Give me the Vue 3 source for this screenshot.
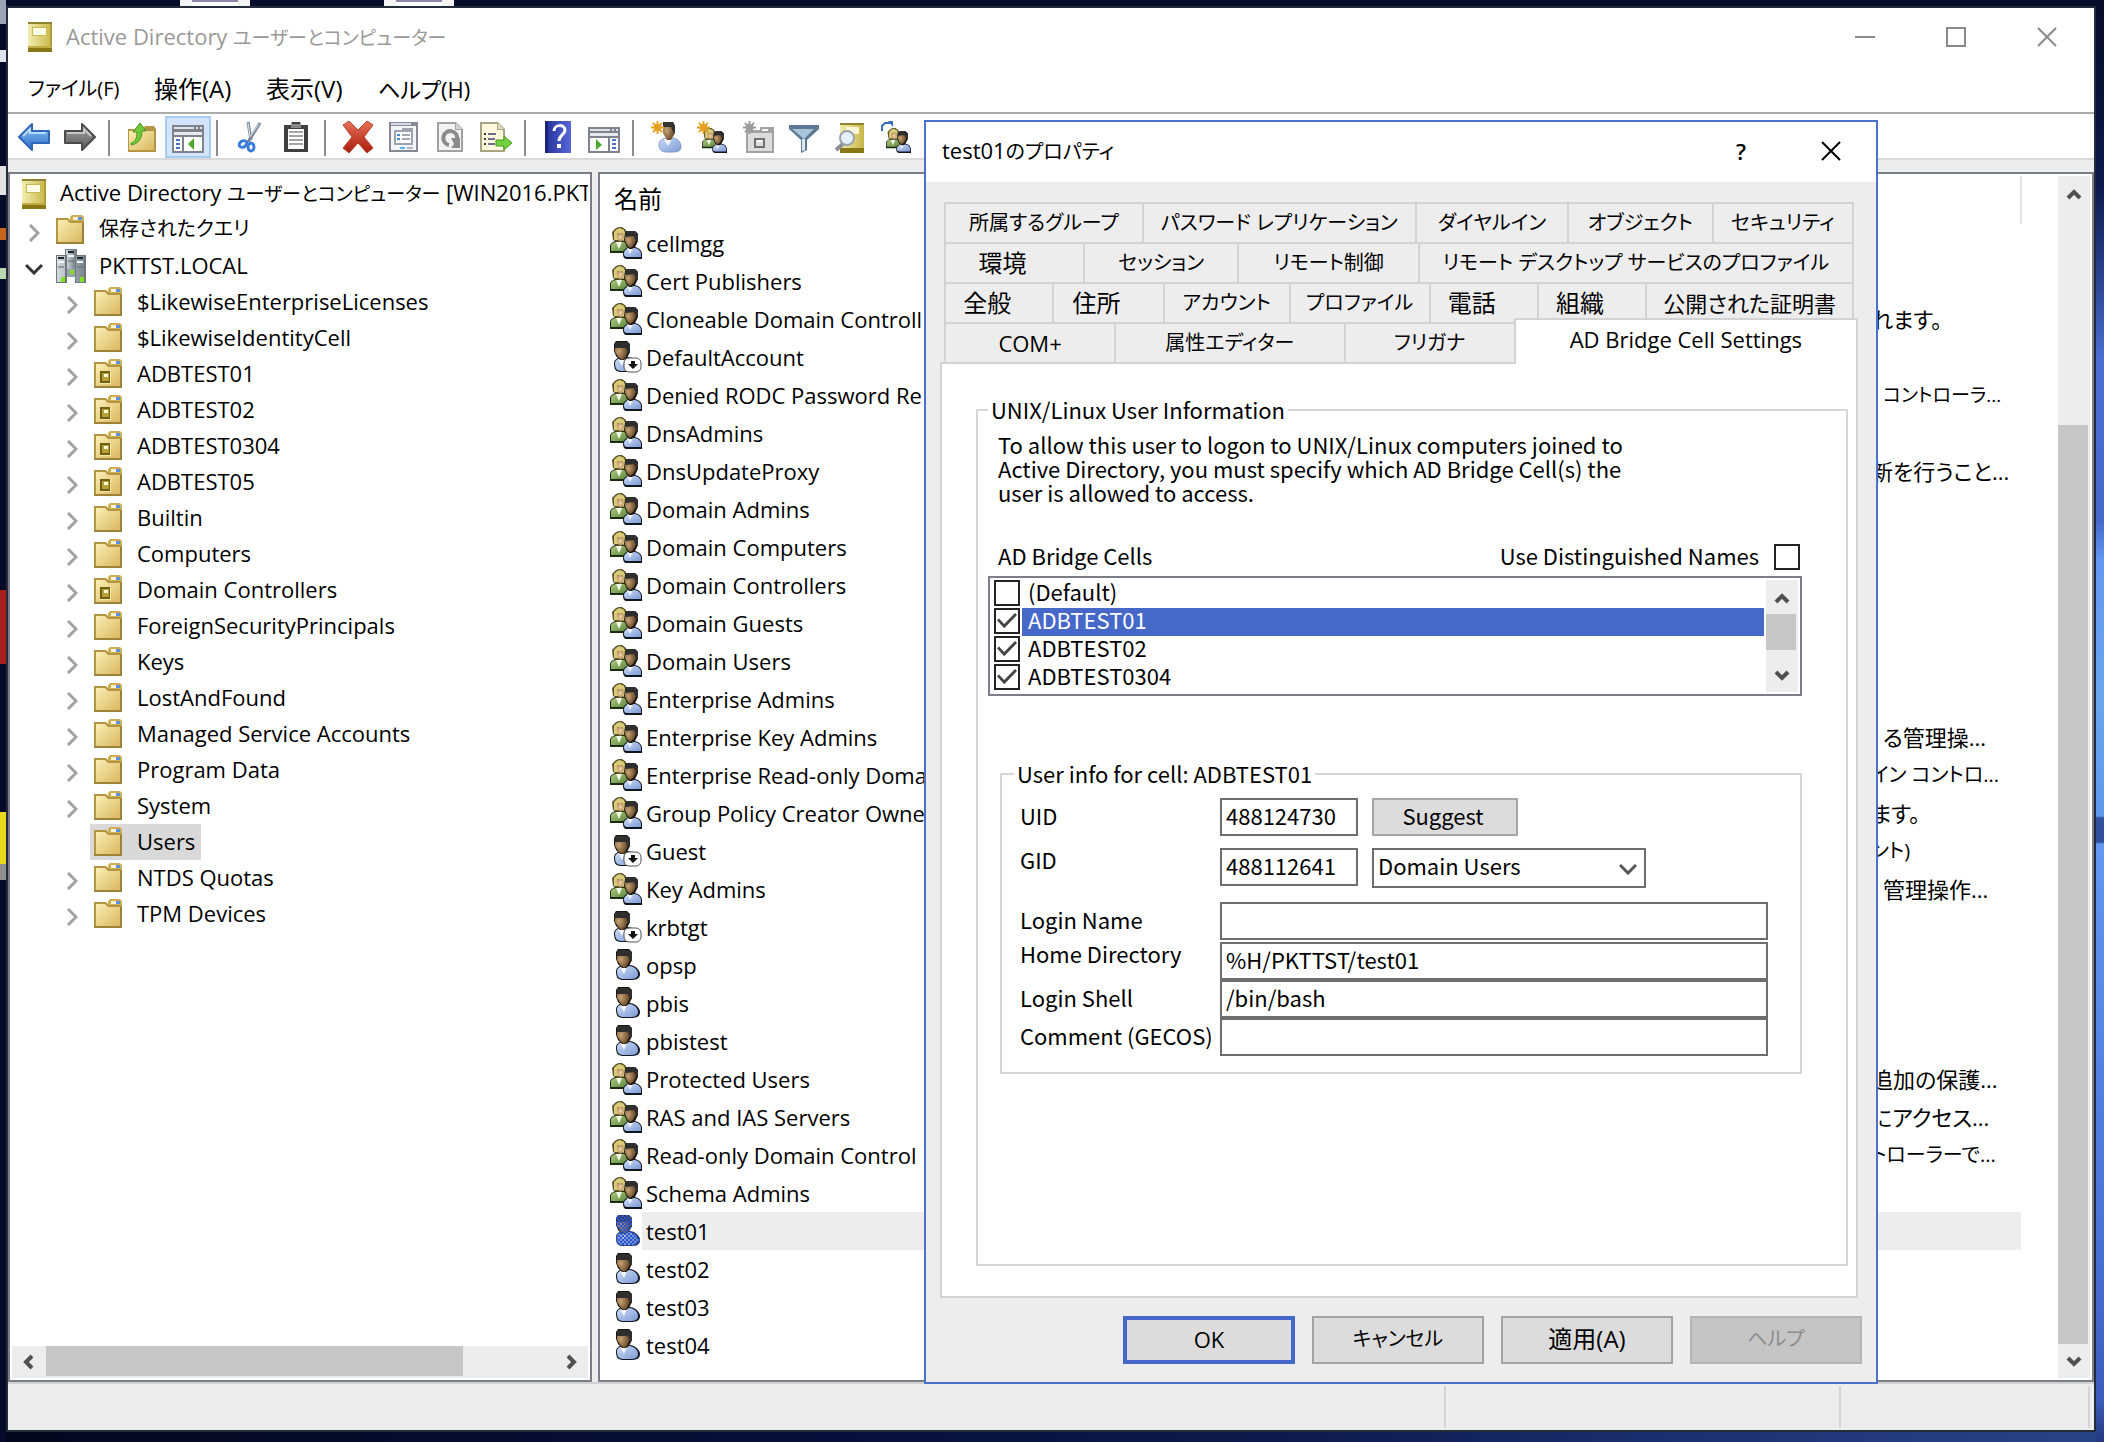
<script setup>
import { ref } from 'vue'

const menus = [
  { name: 'ファイル(F)', face: 'kana' },
  { name: '操作(A)', face: 'kanji' },
  { name: '表示(V)', face: 'kanji' },
  { name: 'ヘルプ(H)' }
]

const tools = [
  [{ icon: 'back', label: '戻る' }, { icon: 'forward', label: '進む' }],
  [{ icon: 'folder-up', label: '上へ' }, { icon: 'tree-pane', label: 'ツリーの表示', on: true }],
  [{ icon: 'cut', label: '切り取り' }, { icon: 'clipboard', label: 'コピー' }],
  [
    { icon: 'delete', label: '削除' },
    { icon: 'props', label: 'プロパティ' },
    { icon: 'refresh', label: '最新の情報に更新' },
    { icon: 'export', label: '一覧のエクスポート' }
  ],
  [{ icon: 'help', label: 'ヘルプ' }, { icon: 'action-pane', label: '操作ウィンドウ' }],
  [
    { icon: 'new-user', label: '新しいユーザー' },
    { icon: 'new-group', label: '新しいグループ' },
    { icon: 'new-ou', label: '新しい組織単位' },
    { icon: 'filter', label: 'フィルター' },
    { icon: 'find', label: '検索' },
    { icon: 'add-member', label: 'グループに追加' }
  ]
]

const tree = [
  { name: '$LikewiseEnterpriseLicenses', icon: 'folder' },
  { name: '$LikewiseIdentityCell', icon: 'folder' },
  { name: 'ADBTEST01', icon: 'ou' },
  { name: 'ADBTEST02', icon: 'ou' },
  { name: 'ADBTEST0304', icon: 'ou' },
  { name: 'ADBTEST05', icon: 'ou' },
  { name: 'Builtin', icon: 'folder' },
  { name: 'Computers', icon: 'folder' },
  { name: 'Domain Controllers', icon: 'ou' },
  { name: 'ForeignSecurityPrincipals', icon: 'folder' },
  { name: 'Keys', icon: 'folder' },
  { name: 'LostAndFound', icon: 'folder' },
  { name: 'Managed Service Accounts', icon: 'folder' },
  { name: 'Program Data', icon: 'folder' },
  { name: 'System', icon: 'folder' },
  { name: 'Users', icon: 'folder', selected: true },
  { name: 'NTDS Quotas', icon: 'folder' },
  { name: 'TPM Devices', icon: 'folder' }
]

const entries = [
  { name: 'cellmgg', icon: 'group' },
  { name: 'Cert Publishers', icon: 'group' },
  { name: 'Cloneable Domain Controll', icon: 'group', desc: 'れます。' },
  { name: 'DefaultAccount', icon: 'user-off' },
  { name: 'Denied RODC Password Re', icon: 'group', desc: 'コントローラ...', face: 'tight inset' },
  { name: 'DnsAdmins', icon: 'group' },
  { name: 'DnsUpdateProxy', icon: 'group', desc: '新を行うこと...' },
  { name: 'Domain Admins', icon: 'group' },
  { name: 'Domain Computers', icon: 'group' },
  { name: 'Domain Controllers', icon: 'group' },
  { name: 'Domain Guests', icon: 'group' },
  { name: 'Domain Users', icon: 'group' },
  { name: 'Enterprise Admins', icon: 'group' },
  { name: 'Enterprise Key Admins', icon: 'group', desc: 'る管理操...', face: 'inset' },
  { name: 'Enterprise Read-only Doma', icon: 'group', desc: 'イン コントロ...', face: 'kana' },
  { name: 'Group Policy Creator Owne', icon: 'group', desc: 'ます。' },
  { name: 'Guest', icon: 'user-off', desc: 'ント)', face: 'kana' },
  { name: 'Key Admins', icon: 'group', desc: '管理操作...', face: 'inset' },
  { name: 'krbtgt', icon: 'user-off' },
  { name: 'opsp', icon: 'user' },
  { name: 'pbis', icon: 'user' },
  { name: 'pbistest', icon: 'user' },
  { name: 'Protected Users', icon: 'group', desc: '追加の保護...' },
  { name: 'RAS and IAS Servers', icon: 'group', desc: 'にアクセス...' },
  { name: 'Read-only Domain Control', icon: 'group', desc: 'トローラーで...', face: 'kana' },
  { name: 'Schema Admins', icon: 'group' },
  { name: 'test01', icon: 'user-hot', selected: true },
  { name: 'test02', icon: 'user' },
  { name: 'test03', icon: 'user' },
  { name: 'test04', icon: 'user' }
]

/* size is the tab's share of its row */
const tabRows = [
  [
    { name: '所属するグループ', size: 198 },
    { name: 'パスワード レプリケーション', size: 274 },
    { name: 'ダイヤルイン', size: 152 },
    { name: 'オブジェクト', size: 144 },
    { name: 'セキュリティ', size: 140 }
  ],
  [
    { name: '環境', size: 138, face: 'short' },
    { name: 'セッション', size: 154 },
    { name: 'リモート制御', size: 180 },
    { name: 'リモート デスクトップ サービスのプロファイル', size: 436 }
  ],
  [
    { name: '全般', size: 108, face: 'short' },
    { name: '住所', size: 110, face: 'short' },
    { name: 'アカウント', size: 126 },
    { name: 'プロファイル', size: 140 },
    { name: '電話', size: 108, face: 'short' },
    { name: '組織', size: 108, face: 'short' },
    { name: '公開された証明書', size: 208, face: 'base' }
  ],
  [
    { name: 'COM+', size: 170, face: 'base' },
    { name: '属性エディター', size: 230 },
    { name: 'フリガナ', size: 170 },
    { name: 'AD Bridge Cell Settings', size: 344, face: 'base', active: true }
  ]
]

const cells = ref([
  { name: '(Default)', on: false },
  { name: 'ADBTEST01', on: true, selected: true },
  { name: 'ADBTEST02', on: true },
  { name: 'ADBTEST0304', on: true }
])
const useDn = ref(false)
const uid = ref('488124730')
const gid = ref('488112641')
const group = ref('Domain Users')
const fields = ref([
  { id: 'login', label: 'Login Name', value: '' },
  { id: 'home', label: 'Home Directory', value: '%H/PKTTST/test01' },
  { id: 'shell', label: 'Login Shell', value: '/bin/bash' },
  { id: 'gecos', label: 'Comment (GECOS)', value: '' }
])
</script>

<template>
  <div class="desktop">
    <svg class="defs" aria-hidden="true">
      <defs>
        <linearGradient id="gFolder" x1="0" y1="0" x2="1" y2="1"><stop offset="0" stop-color="#fbeeb4" /><stop offset="1" stop-color="#d9b860" /></linearGradient>
        <linearGradient id="gBook" x1="0" y1="0" x2="1" y2="0"><stop offset="0" stop-color="#f2edb0" /><stop offset="1" stop-color="#c9b647" /></linearGradient>
        <linearGradient id="gBlue" x1="0" y1="0" x2="0" y2="1"><stop offset="0" stop-color="#8fc3f7" /><stop offset="1" stop-color="#2c6fc9" /></linearGradient>
        <linearGradient id="gGrey" x1="0" y1="0" x2="0" y2="1"><stop offset="0" stop-color="#a9a9a9" /><stop offset="1" stop-color="#565656" /></linearGradient>
        <linearGradient id="gRed" x1="0" y1="0" x2="0" y2="1"><stop offset="0" stop-color="#e8705a" /><stop offset="1" stop-color="#a81c08" /></linearGradient>
        <linearGradient id="gHelp" x1="0" y1="0" x2="1" y2="0"><stop offset="0" stop-color="#25309a" /><stop offset="1" stop-color="#5568d8" /></linearGradient>
        <linearGradient id="gShirt" x1="0" y1="0" x2="1" y2="1"><stop offset="0" stop-color="#cddcf6" /><stop offset="1" stop-color="#7d9bd6" /></linearGradient>
        <linearGradient id="gGreen" x1="0" y1="0" x2="1" y2="1"><stop offset="0" stop-color="#a9c981" /><stop offset="1" stop-color="#5f8a3c" /></linearGradient>
        <radialGradient id="gSkin" cx=".3" cy=".45" r=".75"><stop offset="0" stop-color="#c9a273" /><stop offset="1" stop-color="#553a1c" /></radialGradient>
        <radialGradient id="gFair" cx=".5" cy=".5" r=".7"><stop offset="0" stop-color="#efd7ae" /><stop offset="1" stop-color="#a67a45" /></radialGradient>
        <linearGradient id="gServer" x1="0" y1="0" x2="1" y2="0"><stop offset="0" stop-color="#d4dade" /><stop offset="1" stop-color="#7b868d" /></linearGradient>
        <pattern id="pDots" width="4" height="4" patternUnits="userSpaceOnUse"><path d="M0 0h2v2H0zM2 2h2v2H2z" fill="#2f57cc" /></pattern>
      </defs>

      <symbol id="i-book" viewBox="0 0 24 30">
        <path d="M0 0h24v30H0z" fill="url(#gBook)" /><path d="M0 0h24v2H0z" fill="#8f8330" /><path d="M0 24h24v6H0z" fill="#8a7716" /><path d="M0 24h24v2H0z" fill="#c0ac40" />
        <path d="M4 5h15v9H4z" fill="#c8b850" /><path d="M5 6h13v7H5z" fill="#fdfce6" /><path d="M22 2h2v22h-2z" fill="#b09d35" />
      </symbol>
      <symbol id="i-folder" viewBox="0 0 28 30">
        <path d="M14 4V2l2-2h10l2 2v5H14z" fill="#cfae55" /><path d="M17 2h9v3h-9z" fill="#fff6d6" /><path d="M22 2h4v3h-4z" fill="#5d8fe0" />
        <path d="M0 3h12l3 3h13v23H0z" fill="#b39542" /><path d="M2 5h9l3 3h12v19H2z" fill="url(#gFolder)" /><path d="M26 8h2v21H0v-2h26z" fill="#9d8338" />
      </symbol>
      <symbol id="i-ou" viewBox="0 0 28 30">
        <use href="#i-folder" width="28" height="30" /><path d="M6 12h11v13H6z" fill="#f6e8a5" /><path d="M6 12h10v12H6z" fill="#6f5f12" /><path d="M8 14h7v8H8z" fill="#b8a238" /><path d="M10 15h4v3h-4z" fill="#fffbe0" />
      </symbol>
      <symbol id="i-domain" viewBox="0 0 30 34">
        <path d="M9 0h12v26H9z" fill="#76828a" /><path d="M10 1h9v24h-9z" fill="url(#gServer)" /><path d="M0 6h11v28H0zM19 6h11v28H19z" fill="#6c777e" /><path d="M1 7h8v26H1zM20 7h8v26h-8z" fill="url(#gServer)" />
        <path d="M11 20h8v8h-8z" fill="#98a4ab" /><path d="M2 9h6M21 9h6M12 3h6" stroke="#1d262c" stroke-width="2" /><path d="M2 13h6M21 13h6M12 7h6" stroke="#f4f7f8" stroke-width="2" /><path d="M2 18h6M21 18h6M12 12h6" stroke="#57636b" stroke-width="1" />
        <path d="M5 28h4v5H5zM14 21h4v4h-4zM24 28h4v5h-4z" fill="#84e01c" />
      </symbol>

      <symbol id="i-person" viewBox="0 0 32 32">
        <path d="M6 22c0-3 4-6 8-6h5c6 0 11 5 11 9 0 5-4 6-10 6h-6c-6 0-8-2-8-9z" fill="#10161f" /><path d="M7 22c0-3 4-5 7-5h5c5 0 9 4 9 8s-3 5-8 5h-6c-5 0-7-2-7-8z" fill="url(#gShirt)" /><path d="M10 18l4 7 3-7z" fill="#f4f7fd" />
        <path d="M6 3l2-3h11l3 3v8l-3 6-3 2h-4l-4-4-2-5z" fill="#1a1611" /><path d="M7 5l10-2 3 4v4l-3 6-3 2-3-2-4-6z" fill="url(#gSkin)" /><path d="M7 1h12l3 3v8h-2l-2-5H7z" fill="#2e2e2e" />
      </symbol>
      <symbol id="i-user" viewBox="0 0 32 32"><use href="#i-person" width="32" height="32" /></symbol>
      <symbol id="i-user-off" viewBox="0 0 32 32">
        <use href="#i-person" x="-2" width="32" height="32" /><rect x="14" y="17" width="17" height="14" rx="5" fill="#fff" stroke="#555" stroke-width="1" /><path d="M21 20h4v3h3l-5 5-5-5h3z" fill="#111" />
      </symbol>
      <symbol id="i-user-hot" viewBox="0 0 32 32">
        <use href="#i-person" width="32" height="32" /><path d="M8 0h11l3 3v8l-3 5c6 1 11 5 11 9 0 5-4 6-10 6h-6c-6 0-8-2-8-9 0-3 3-5 5-6l-5-6V3z" fill="#3f63cf" fill-opacity=".4" /><path d="M8 0h11l3 3v8l-3 5c6 1 11 5 11 9 0 5-4 6-10 6h-6c-6 0-8-2-8-9 0-3 3-5 5-6l-5-6V3z" fill="url(#pDots)" />
      </symbol>
      <symbol id="i-group" viewBox="0 0 32 32">
        <path d="M0 19c0-3 4-5 7-5h7c3 0 4 4 4 12H0z" fill="#1d2a12" /><path d="M1 19c0-3 3-4 6-4h7c2 0 3 3 3 9H1z" fill="url(#gGreen)" /><path d="M6 15l3 7 3-7z" fill="#f2f5e8" />
        <path d="M2 5l4-4 3-1h3l4 3v8l-4 4H7l-4-2z" fill="#5a5128" /><path d="M4 5l3-3 3-1 4 2 1 3v7H4z" fill="#d8cc78" /><path d="M7 6h6l1 4-2 4H9l-2-4z" fill="url(#gFair)" />
        <path d="M13 26c0-3 4-6 8-6h3c5 0 8 4 8 7v5H17c-3 0-4-2-4-6z" fill="#10161f" /><path d="M14 26c0-3 4-5 7-5h3c4 0 7 3 7 6v3H17c-2 0-3-1-3-4z" fill="url(#gShirt)" /><path d="M17 21l3 6 3-6z" fill="#f4f7fd" />
        <path d="M15 6l3-2h7l3 3v7l-3 6-3 2h-3l-3-4-2-5z" fill="#1a1611" /><path d="M15 8l8-1 3 3v4l-3 5-3 2-3-3-2-5z" fill="url(#gSkin)" /><path d="M16 4h9l3 3v7h-2l-2-5-9 1z" fill="#2e2e2e" />
      </symbol>

      <symbol id="i-back" viewBox="0 0 32 32"><path d="M1 16L14 3v7h17v12H14v7z" fill="url(#gBlue)" stroke="#2f66b5" stroke-width="2" stroke-linejoin="round" /><path d="M5 15l7-7v4h16" fill="none" stroke="#b8dcff" stroke-width="2" /></symbol>
      <symbol id="i-forward" viewBox="0 0 32 32"><path d="M31 16L18 3v7H1v12h17v7z" fill="url(#gGrey)" stroke="#4b4b4b" stroke-width="2" stroke-linejoin="round" /><path d="M3 12h17V8l7 7" fill="none" stroke="#c6c6c6" stroke-width="2" /></symbol>
      <symbol id="i-folder-up" viewBox="0 0 32 32">
        <path d="M2 8h15l2-3h9l2 3v23H2z" fill="#b39542" /><path d="M3 10h25v19H3z" fill="url(#gFolder)" /><path d="M5 22c4-1 6-4 6-11H7l7-9 6 8h-4c0 8-4 13-11 14z" fill="#6fc93a" stroke="#4a9424" stroke-width="1" />
      </symbol>
      <symbol id="i-tree-pane" viewBox="0 0 32 32">
        <path d="M0 4h32v28H0z" fill="#7e828c" /><path d="M2 11h28v3H2z" fill="#e8eaf0" /><path d="M2 6h20v2H2zM24 6h2v2h-2zM28 6h2v2h-2z" fill="#dfe2ea" /><path d="M2 16h28v14H2z" fill="#fff" /><path d="M10 16h2v14h-2z" fill="#7e828c" />
        <path d="M4 18h4v2H4zM4 22h4v2H4zM4 26h4v2H4z" fill="#4579c4" /><path d="M22 17v12l-6-6z" fill="#4aa92c" />
      </symbol>
      <symbol id="i-action-pane" viewBox="0 0 32 32">
        <path d="M0 6h32v26H0z" fill="#7e828c" /><path d="M2 12h28v3H2z" fill="#e8eaf0" /><path d="M2 8h20v2H2zM24 8h2v2h-2zM28 8h2v2h-2z" fill="#dfe2ea" /><path d="M2 17h28v13H2z" fill="#fff" /><path d="M20 17h2v13h-2z" fill="#7e828c" />
        <path d="M24 18h4v2h-4zM24 22h4v2h-4zM24 26h4v2h-4z" fill="#4579c4" /><path d="M8 18v11l6-5z" fill="#4aa92c" />
      </symbol>
      <symbol id="i-cut" viewBox="0 0 32 32">
        <path d="M14 1l3 18M26 2L14 21" stroke="#76869a" stroke-width="3" fill="none" /><path d="M14 2l2 13M25 3l-9 13" stroke="#dfe5ec" stroke-width="1" fill="none" /><ellipse cx="9" cy="23" rx="4" ry="3" transform="rotate(-30 9 23)" fill="none" stroke="#3a7bdc" stroke-width="3" /><ellipse cx="17" cy="26" rx="3" ry="4" fill="none" stroke="#3a7bdc" stroke-width="3" />
      </symbol>
      <symbol id="i-clipboard" viewBox="0 0 32 32"><path d="M4 4h7l1-3h8l1 3h7v27H4z" fill="#3f3f3f" /><path d="M8 8h16v20H8z" fill="#fff" /><path d="M11 3h10v4H11z" fill="#8a8a8a" /><path d="M9 11h14M9 15h14M9 19h14M9 23h14" stroke="#a5a5a5" stroke-width="2" /></symbol>
      <symbol id="i-delete" viewBox="0 0 32 32"><path d="M1 4l6-4 9 9 9-9 6 4-9 12 9 11-6 5-9-10-9 10-6-5 9-11z" fill="url(#gRed)" stroke="#b5432f" stroke-width="1" /></symbol>
      <symbol id="i-props" viewBox="0 0 32 32">
        <path d="M1 1h29v30H1z" fill="#868a92" /><path d="M3 5h25v24H3z" fill="#f3f4f7" /><path d="M3 2h20v2H3z" fill="#d8dbe2" /><path d="M6 9h8v-2h11v17H6z" fill="#9da3b0" /><path d="M8 11h15v11H8z" fill="#fff" /><path d="M9 13h3v2H9zM9 17h3v2H9z" fill="#4b87d8" /><path d="M14 13h8v2h-8zM14 17h8v2h-8z" fill="#a5a9b1" /><path d="M12 26h5v2h-5z" fill="#58b6e8" /><path d="M19 26h6v2h-6z" fill="#b5b9c1" />
      </symbol>
      <symbol id="i-refresh" viewBox="0 0 32 32"><path d="M3 1h19l7 7v23H3z" fill="#a2a2a2" /><path d="M5 3h16v6h6v20H5z" fill="#f3f3f3" /><path d="M22 2v6h6z" fill="#d5d5d5" /><path d="M15 24a7 7 0 1 1 8-5" fill="none" stroke="#8b8b8b" stroke-width="4" /><path d="M17 17h9v10h-9l3-4z" fill="#8b8b8b" /></symbol>
      <symbol id="i-export" viewBox="0 0 32 32"><path d="M0 1h18l7 7v23H0z" fill="#a9a383" /><path d="M2 3h15v6h6v20H2z" fill="#fdf8dc" /><path d="M18 2v6h6z" fill="#ded9bf" /><path d="M4 13h2M4 18h2M4 23h2" stroke="#3b3b3b" stroke-width="2" /><path d="M8 13h8M8 18h7M8 23h7" stroke="#6c6c8c" stroke-width="2" /><path d="M16 19h8v-4l8 7-8 7v-4h-8z" fill="#72cf3e" stroke="#4c9e25" stroke-width="1" /></symbol>
      <symbol id="i-help" viewBox="0 0 32 32"><path d="M3 0h26v32H3z" fill="url(#gHelp)" /><path d="M3 0h3v32H3z" fill="#1c2478" /><path d="M12 10c0-7 11-7 11-1 0 5-6 5-6 11" fill="none" stroke="#fff" stroke-width="3" /><path d="M15 23h4v4h-4z" fill="#fff" /></symbol>
      <symbol id="i-spark" viewBox="0 0 14 14"><path d="M7 0v14M0 7h14M2 2l10 10M12 2L2 12" stroke="currentColor" stroke-width="2" /><circle cx="7" cy="7" r="4" fill="currentColor" /></symbol>
      <symbol id="i-new-user" viewBox="0 0 32 32">
        <path d="M9 23c0-3 4-6 8-6h5c5 0 9 4 9 9 0 4-3 5-9 5h-5c-6 0-8-3-8-8z" fill="url(#gShirt)" stroke="#8197c4" /><path d="M14 18l4 7 4-7z" fill="#f7f9fe" /><path d="M13 1h10l2 4v7l-4 7h-4l-4-7V3z" fill="url(#gSkin)" /><path d="M13 1h10l2 4v6h-2l-2-5h-8z" fill="#333" /><use href="#i-spark" class="gold" x="1" y="0" width="13" height="13" />
      </symbol>
      <symbol id="i-new-group" viewBox="0 0 32 32"><use href="#i-group" x="5" y="7" width="27" height="25" /><use href="#i-spark" class="gold" x="1" y="0" width="13" height="13" /></symbol>
      <symbol id="i-new-ou" viewBox="0 0 32 32"><path d="M4 9h14V6h14v26H4z" fill="#a3a3a3" /><path d="M6 12h24v18H6z" fill="#dcdcdc" /><path d="M20 8h6v2h-6z" fill="#f7f7f7" /><path d="M12 17h11v10H12z" fill="#707070" /><path d="M14 19h7v6h-7z" fill="#dedede" /><path d="M15 19h5v2h-5z" fill="#fff" /><use href="#i-spark" class="dim" x="1" y="0" width="13" height="13" /></symbol>
      <symbol id="i-filter" viewBox="0 0 32 32"><path d="M1 4h30v4L19 19v10l-6 3V19L1 8z" fill="#5b7895" /><path d="M4 8h22L16 18z" fill="#a9c3db" /><path d="M14 18h3v11l-3 1z" fill="#dfe9f2" /></symbol>
      <symbol id="i-find" viewBox="0 0 32 32"><path d="M6 2h24v30H6z" fill="url(#gBook)" /><path d="M6 2h24v2H6z" fill="#8f8330" /><path d="M6 27h24v5H6z" fill="#8a7716" /><path d="M12 6h13v7H12z" fill="#fdf9d8" /><path d="M10 22l-8 7" stroke="#8a8f96" stroke-width="4" /><circle cx="13" cy="17" r="7" fill="#e4f1fb" stroke="#9aa3ad" stroke-width="2" /></symbol>
      <symbol id="i-add-member" viewBox="0 0 32 32"><use href="#i-group" x="5" y="7" width="27" height="25" /><path d="M2 10V5l3-3h6" fill="none" stroke="#3a6fb8" stroke-width="2" /><path d="M8 0h5v6z" fill="#3a6fb8" /></symbol>
      <symbol id="i-chevron" viewBox="0 0 12 18"><path d="M2 1l8 8-8 8" fill="none" stroke="currentColor" stroke-width="3" /></symbol>
      <symbol id="i-arrow" viewBox="0 0 16 16"><path d="M2 11l6-6 6 6" fill="none" stroke="currentColor" stroke-width="4" /></symbol>
      <symbol id="i-close" viewBox="0 0 20 20"><path d="M1 1l18 18M19 1L1 19" stroke="currentColor" stroke-width="2" /></symbol>
    </svg>

    <div class="scrap scrap-a"></div>
    <div class="scrap scrap-b"></div>

    <main class="console">
      <header class="titlebar">
        <svg class="book"><use href="#i-book" /></svg>
        <h1>Active Directory <span class="tight">ユーザーとコンピューター</span></h1>
        <button class="winbtn" aria-label="最小化"><span class="min"></span></button>
        <button class="winbtn" aria-label="最大化"><span class="max"></span></button>
        <button class="winbtn" aria-label="閉じる"><svg class="x"><use href="#i-close" /></svg></button>
      </header>

      <nav class="menubar">
        <button v-for="m in menus" :key="m.name" :class="m.face">{{ m.name }}</button>
      </nav>

      <div class="toolbar" role="toolbar">
        <div v-for="(set, i) in tools" :key="i" class="toolset">
          <button v-for="t in set" :key="t.icon" :class="{ on: t.on }" :aria-label="t.label">
            <svg><use :href="'#i-' + t.icon" /></svg>
          </button>
        </div>
      </div>

      <div class="panes">
        <section class="pane tree">
          <ul class="nodes">
            <li class="root"><svg class="book"><use href="#i-book" /></svg><p>Active Directory <span class="tight">ユーザーとコンピューター</span> [WIN2016.PKT</p></li>
            <li class="top"><svg class="chev"><use href="#i-chevron" /></svg><svg class="ico"><use href="#i-folder" /></svg><p class="kana">保存されたクエリ</p></li>
            <li class="top"><svg class="chev open"><use href="#i-chevron" /></svg><svg class="ico server"><use href="#i-domain" /></svg><p>PKTTST.LOCAL</p></li>
            <li v-for="n in tree" :key="n.name" class="sub">
              <svg class="chev" :class="{ none: n.selected }"><use href="#i-chevron" /></svg>
              <div class="node" :class="{ selected: n.selected }"><svg class="ico"><use :href="'#i-' + n.icon" /></svg><p>{{ n.name }}</p></div>
            </li>
          </ul>
          <div class="hscroll">
            <button aria-label="左へ"><svg class="left"><use href="#i-arrow" /></svg></button>
            <div class="track"><div class="thumb"></div></div>
            <button aria-label="右へ"><svg class="right"><use href="#i-arrow" /></svg></button>
          </div>
        </section>

        <section class="pane list">
          <table>
            <colgroup><col class="c-icon" /><col /><col class="c-desc" /></colgroup>
            <thead>
              <tr><th colspan="2" scope="col" class="kanji">名前</th><th class="edge"></th></tr>
            </thead>
            <tbody>
              <tr v-for="(e, i) in entries" :key="i" :class="{ selected: e.selected }">
                <td class="icon"><svg><use :href="'#i-' + e.icon" /></svg></td>
                <td class="name">{{ e.name }}</td>
                <td class="desc" :class="e.face">{{ e.desc }}</td>
              </tr>
            </tbody>
          </table>
          <div class="vscroll">
            <button aria-label="上へ"><svg><use href="#i-arrow" /></svg></button>
            <div class="track"><div class="thumb"></div></div>
            <button aria-label="下へ"><svg class="down"><use href="#i-arrow" /></svg></button>
          </div>
        </section>
      </div>

      <footer class="status"><span></span><span></span><span></span></footer>
    </main>

    <section class="dialog" role="dialog" aria-labelledby="dlg-title">
      <header>
        <h2 id="dlg-title">test01<span class="kana">のプロパティ</span></h2>
        <button class="dlgbtn" aria-label="ヘルプ">?</button>
        <button class="dlgbtn" aria-label="閉じる"><svg class="x"><use href="#i-close" /></svg></button>
      </header>

      <div class="tabs" role="tablist">
        <div v-for="(row, i) in tabRows" :key="i" class="tabrow" :class="{ front: i === 3 }">
          <button v-for="t in row" :key="t.name" role="tab" :aria-selected="!!t.active" :class="[t.face || 'kana', { active: t.active }]" :style="{ flexGrow: t.size }"><span>{{ t.name }}</span></button>
        </div>
      </div>

      <div class="page">
        <fieldset class="outer">
          <legend>UNIX/Linux User Information</legend>
          <p>To allow this user to logon to UNIX/Linux computers joined to<br />Active Directory, you must specify which AD Bridge Cell(s) the<br />user is allowed to access.</p>

          <div class="cellhead">
            <span>AD Bridge Cells</span>
            <label><span>Use Distinguished Names</span><input v-model="useDn" type="checkbox" /></label>
          </div>

          <div class="listbox">
            <div class="rows">
              <label v-for="c in cells" :key="c.name" :class="{ selected: c.selected }"><input v-model="c.on" type="checkbox" /><span>{{ c.name }}</span></label>
            </div>
            <div class="vscroll small">
              <button aria-label="上へ"><svg><use href="#i-arrow" /></svg></button>
              <div class="track"><div class="thumb"></div></div>
              <button aria-label="下へ"><svg class="down"><use href="#i-arrow" /></svg></button>
            </div>
          </div>

          <fieldset class="inner">
            <legend>User info for cell: ADBTEST01</legend>
            <div class="row ids">
              <label for="uid">UID</label>
              <input id="uid" v-model="uid" type="text" />
              <button class="suggest">Suggest</button>
            </div>
            <div class="row ids gid">
              <label for="gid">GID</label>
              <input id="gid" v-model="gid" type="text" />
              <div class="combo">
                <select v-model="group" aria-label="Group"><option>Domain Users</option></select>
                <svg><use href="#i-chevron" /></svg>
              </div>
            </div>
            <div v-for="f in fields" :key="f.id" class="row" :class="f.id">
              <label :for="f.id">{{ f.label }}</label>
              <input :id="f.id" v-model="f.value" type="text" />
            </div>
          </fieldset>
        </fieldset>
      </div>

      <footer>
        <button class="default">OK</button>
        <button class="kana">キャンセル</button>
        <button class="kanji">適用(A)</button>
        <button class="kana" disabled>ヘルプ</button>
      </footer>
    </section>
  </div>
</template>

<style>
body {
  margin: 0;
  background: #050a28;
}
</style>

<style scoped>
* {
  box-sizing: border-box;
}
.desktop {
  position: relative;
  display: flex;
  min-height: 100vh;
  padding: 6px 8px 10px 6px;
  overflow: hidden;
  font: 22px/36px "Open Sans", "Noto Sans CJK JP", sans-serif;
  font-feature-settings: "palt";
  color: #000;
  background:
    linear-gradient(#9aa4b5 0 24px, #050a28 24px 50px, #dfe3ea 50px 62px, #050a28 62px 166px, #e3e3e3 166px 195px, #050a28 195px 228px, #c9641f 228px 240px, #050a28 240px 268px, #b9d8b0 268px 279px, #050a28 279px 590px, #a8201c 590px 664px, #050a28 664px 812px, #e8d820 812px 864px, #8f8f8f 864px 880px, #050a28 880px) left / 6px 100% no-repeat,
    linear-gradient(#060c28 0, #0d1848 180px, #2a4490 280px, #4b70d2 360px, #4668c9 520px, #6398f0 560px, #6ba6ee 700px, #5f98ec 816px, #33509f 818px 842px, #6398f0 844px, #4a70d4 1250px, #3c5cba 1400px, #24397c) right / 8px 100% no-repeat,
    linear-gradient(90deg, #03061c 0, #07103a 40%, #0e1a4c 62%, #1c3070 80%, #2a4488) bottom / 100% 12px no-repeat,
    #060b2a;
}
.defs {
  position: absolute;
  width: 0;
  height: 0;
}
.gold {
  color: #e8a020;
}
.dim {
  color: #9a9a9a;
}
.scrap {
  position: absolute;
  top: 0;
  width: 70px;
  height: 6px;
  background: linear-gradient(#8a86a8 0 2px, #fff 2px);
  border: solid #f4f4f4;
  border-width: 0 12px;
}
.scrap-a {
  left: 180px;
}
.scrap-b {
  left: 384px;
}
button,
input,
select {
  font: inherit;
  font-feature-settings: inherit;
  color: inherit;
  border-radius: 0;
  margin: 0;
}
button {
  padding: 0;
  border: 0;
  background: none;
}
h1,
h2,
p,
ul {
  margin: 0;
  padding: 0;
  font-size: inherit;
  font-weight: 400;
}

/* type sizes beside the base: kana strings run smaller, short kanji words larger */
.tight {
  font-size: 19px;
}
.desktop .kana {
  font-size: 20px;
}
.desktop .kanji,
.desktop .short {
  font-size: 24px;
}

/* console window */
.console {
  flex: 1;
  min-width: 0;
  display: flex;
  flex-direction: column;
  border: 2px solid #232b3c;
  background: #fff;
}
.titlebar {
  display: flex;
  align-items: center;
  height: 58px;
  padding: 0 2px 0 20px;
}
.titlebar h1 {
  flex: 1;
  margin-left: 14px;
  color: #999;
  white-space: nowrap;
}
.book {
  flex: none;
  width: 24px;
  height: 30px;
}
.winbtn {
  display: grid;
  place-items: center;
  width: 91px;
  height: 58px;
  color: #8a8a8a;
}
.min {
  width: 20px;
  height: 2px;
  background: #8a8a8a;
}
.max {
  width: 20px;
  height: 20px;
  border: 2px solid #8a8a8a;
}
.x {
  width: 20px;
  height: 20px;
}
.menubar {
  flex: none;
  display: grid;
  grid-template-columns: 126px 112px 112px auto;
  justify-content: start;
  height: 48px;
  padding: 5px 0 7px 20px;
  border-bottom: 2px solid #ababab;
}
.menubar button {
  text-align: left;
  white-space: nowrap;
}
.toolbar {
  display: flex;
  height: 46px;
  padding: 2px 0 0 3px;
  border-bottom: 2px solid #d9d9d9;
}
.toolset {
  display: flex;
}
.toolset + .toolset::before {
  content: "";
  width: 2px;
  height: 36px;
  margin: 4px 9px 0 5px;
  background: #8c8c8c;
}
.toolset button {
  display: grid;
  place-items: center;
  width: 46px;
  height: 42px;
}
.toolset button.on {
  background: #d3e4fa;
  border: 2px solid #a9ccf5;
}
.toolset svg {
  width: 32px;
  height: 32px;
}
.panes {
  flex: 1;
  display: grid;
  grid-template-columns: 584px 1fr;
  gap: 6px;
  padding-top: 12px;
  background: #ededed;
}
.pane {
  border: 2px solid #7b7e89;
  background: #fff;
  min-width: 0;
}
.tree {
  display: flex;
  flex-direction: column;
  justify-content: space-between;
  padding: 2px;
}
.nodes {
  list-style: none;
  overflow: hidden;
}
.nodes li {
  display: flex;
  align-items: center;
  height: 36px;
  white-space: nowrap;
}
.nodes p {
  padding-bottom: 2px;
}
.root {
  gap: 14px;
  padding-left: 10px;
}
.top {
  padding-left: 16px;
}
.top .ico {
  margin: 0 15px 0 16px;
}
.top .server {
  margin-right: 13px;
}
.sub {
  padding-left: 54px;
}
.chev {
  flex: none;
  width: 12px;
  height: 18px;
  margin-top: 6px;
  color: #a2a2a2;
}
.chev.open {
  transform: rotate(90deg);
  color: #333;
}
.chev.none {
  visibility: hidden;
}
.ico {
  flex: none;
  width: 28px;
  height: 30px;
}
.server {
  width: 30px;
  height: 34px;
}
.node {
  display: flex;
  align-items: center;
  gap: 15px;
  height: 36px;
  margin-left: 12px;
  padding: 0 6px 0 4px;
}
.node.selected {
  background: #d9d9d9;
}
.hscroll {
  display: flex;
  height: 32px;
  background: #ededed;
}
.hscroll button {
  width: 34px;
  color: #505050;
}
.hscroll svg,
.vscroll svg {
  display: block;
  width: 16px;
  height: 16px;
  margin: auto;
}
.hscroll .left {
  transform: rotate(-90deg);
}
.hscroll .right {
  transform: rotate(90deg);
}
.track {
  flex: 1;
}
.hscroll .thumb {
  width: 82%;
  height: 30px;
  background: #c7c7c7;
}
.list {
  display: flex;
  padding: 2px 2px 2px 0;
}
table {
  flex: 1;
  align-self: flex-start;
  table-layout: fixed;
  border-collapse: collapse;
  min-width: 0;
  margin-right: 36px;
}
.c-icon {
  width: 42px;
}
.c-desc {
  width: 150px;
}
th {
  height: 48px;
  padding: 0 0 2px 14px;
  font-weight: 400;
  text-align: left;
}
th.edge {
  border-right: 2px solid #e2e2e2;
}
td {
  height: 38px;
  padding: 0;
  white-space: nowrap;
}
td.icon {
  padding-left: 10px;
}
td.icon svg {
  display: block;
  width: 32px;
  height: 32px;
}
td.name {
  padding-left: 4px;
}
td.inset {
  padding-left: 12px;
}
tr.selected td.name,
tr.selected td.desc {
  background: #ededed;
}
.vscroll {
  display: flex;
  flex-direction: column;
  flex: none;
  width: 32px;
  background: #ededed;
}
.vscroll button {
  height: 34px;
  color: #505050;
}
.vscroll button:first-child {
  padding-top: 4px;
}
.vscroll .track {
  display: flex;
  flex-direction: column;
  justify-content: flex-end;
}
.vscroll .thumb {
  width: 30px;
  height: 81%;
  background: #c7c7c7;
}
.vscroll .down {
  transform: rotate(180deg);
}
.status {
  display: grid;
  grid-template-columns: 1fr 395px 249px 4px;
  height: 48px;
  padding: 2px 0;
  border-top: 2px solid #d2d2d2;
  background: #ededed;
}
.status span {
  border-right: 2px solid #d4d4d4;
}

/* property sheet */
.dialog {
  position: absolute;
  left: 924px;
  top: 120px;
  width: 954px;
  border: 2px solid #4a72cc;
  background: #ededed;
}
.dialog > header {
  display: flex;
  align-items: center;
  height: 60px;
  padding: 0 0 0 16px;
  background: #fff;
}
.dialog h2 {
  flex: 1;
  padding-bottom: 2px;
}
.dlgbtn {
  display: grid;
  place-items: center;
  width: 90px;
  height: 60px;
  padding-bottom: 2px;
  font-weight: 600;
}
.tabs {
  margin: 20px 22px 0 18px;
}
.tabrow {
  display: flex;
  height: 40px;
  border-right: 2px solid #d3d3d3;
}
.tabrow.front {
  border-right: 0;
}
.tabrow button {
  flex: 0 1 0;
  min-width: 0;
  border: solid #d3d3d3;
  border-width: 2px 0 0 2px;
  line-height: 34px;
  white-space: nowrap;
}
.tabrow .short span {
  margin-right: 24px;
}
.tabrow button.active {
  position: relative;
  z-index: 1;
  margin: -4px -4px -2px 0;
  padding-bottom: 6px;
  border-right-width: 2px;
  background: #fff;
}
.page {
  margin: 0 18px 0 14px;
  padding: 34px 8px 30px 34px;
  border: 2px solid #d3d3d3;
  background: #fff;
  font: 22px/24px "Noto Sans CJK JP", sans-serif;
  font-feature-settings: normal;
}
fieldset {
  min-width: 0;
  margin: 0;
  border: 2px solid #d7d7d7;
}
.outer {
  height: 868px;
  padding: 10px 44px 0 10px;
}
legend {
  height: 24px;
  padding: 0 3px;
  line-height: 22px;
}
.outer > p {
  margin-left: 10px;
}
.cellhead {
  display: flex;
  justify-content: space-between;
  align-items: center;
  margin: 40px 2px 6px 10px;
  height: 26px;
  line-height: 22px;
}
.cellhead span {
  padding-bottom: 4px;
}
.cellhead label {
  display: flex;
  align-items: center;
  gap: 15px;
}
input[type="checkbox"] {
  appearance: none;
  flex: none;
  display: grid;
  place-items: center;
  width: 26px;
  height: 26px;
  border: 2px solid #222;
  background: #fff;
}
input[type="checkbox"]:checked::before {
  content: "";
  width: 20px;
  height: 16px;
  background: #444;
  clip-path: polygon(0 45%, 10% 34%, 36% 68%, 90% 0, 100% 12%, 36% 96%);
}
.listbox {
  display: flex;
  gap: 2px;
  height: 120px;
  padding: 2px 2px 2px 4px;
  border: 2px solid #7b7e89;
}
.rows {
  flex: 1;
}
.rows label {
  display: flex;
  gap: 2px;
  height: 28px;
}
.rows span {
  flex: 1;
  padding-left: 6px;
  line-height: 22px;
}
.rows .selected span {
  color: #fff;
  background: #4668c9;
}
.vscroll.small .track {
  justify-content: flex-start;
}
.vscroll.small .thumb {
  height: 36px;
}
.inner {
  margin: 66px 0 0 12px;
  height: 312px;
  padding: 12px 32px 0 18px;
}
.inner legend {
  margin-left: -6px;
}
.row {
  display: grid;
  grid-template-columns: 200px 1fr;
  align-items: center;
  line-height: 22px;
}
.row.ids {
  grid-template-columns: 200px 138px auto;
  justify-content: start;
}
.row.gid {
  margin: 12px 0 14px;
  align-items: start;
}
.row.home {
  margin-top: 2px;
  align-items: start;
}
.row label {
  padding-bottom: 4px;
  white-space: nowrap;
}
.row input {
  width: 100%;
  height: 38px;
  padding: 0 4px 4px;
  border: 2px solid #6e6e6e;
  background: #fff;
}
.suggest {
  width: 146px;
  height: 38px;
  margin-left: 14px;
  padding: 0 4px 4px 0;
  border: 2px solid #a5a5a5;
  background: #dcdcdc;
}
.combo {
  position: relative;
  width: 274px;
  height: 40px;
  margin-left: 14px;
}
.combo select {
  appearance: none;
  width: 100%;
  height: 40px;
  padding: 0 4px 6px;
  border: 2px solid #6e6e6e;
  background: #fff;
}
.combo svg {
  position: absolute;
  right: 12px;
  top: 12px;
  width: 12px;
  height: 18px;
  transform: rotate(90deg);
  color: #555;
  pointer-events: none;
}
.dialog > footer {
  display: flex;
  justify-content: flex-end;
  gap: 17px;
  padding: 18px 14px;
}
.dialog > footer button {
  width: 172px;
  height: 48px;
  padding-bottom: 2px;
  border: 2px solid #a3a3a3;
  background: #dcdcdc;
  line-height: 36px;
}
.dialog > footer .default {
  border: 4px solid #4668c9;
}
.dialog > footer button:disabled {
  border-color: #b5b5b5;
  background: #c5c5c5;
  color: #8d8d8d;
}
</style>
